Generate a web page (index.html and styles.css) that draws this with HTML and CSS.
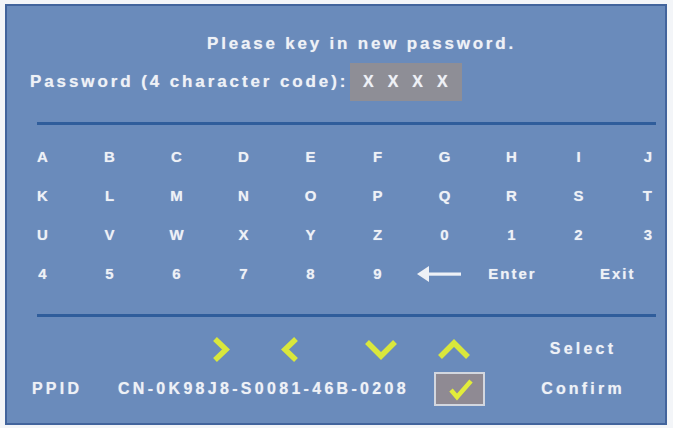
FILE: index.html
```html
<!DOCTYPE html>
<html lang="en">
<head>
<meta charset="utf-8">
<title>Password</title>
<link rel="stylesheet" href="styles.css">
</head>
<body>
<div class="panel">
  <div class="title">Please key in new password.</div>
  <div class="pw-row">
    <span class="pw-label">Password (4 character code):</span>
    <span class="pw-box"><span>X</span><span>X</span><span>X</span><span>X</span></span>
  </div>
  <div class="rule"></div>

  <div class="keys">
    <span>A</span><span>B</span><span>C</span><span>D</span><span>E</span><span>F</span><span>G</span><span>H</span><span>I</span><span class="last">J</span>
    <span>K</span><span>L</span><span>M</span><span>N</span><span>O</span><span>P</span><span>Q</span><span>R</span><span>S</span><span class="last">T</span>
    <span>U</span><span>V</span><span>W</span><span>X</span><span>Y</span><span>Z</span><span>0</span><span>1</span><span>2</span><span class="last">3</span>
    <span>4</span><span>5</span><span>6</span><span>7</span><span>8</span><span>9</span>
    <span class="back">
      <svg width="44" height="18" viewBox="0 0 44 18"><polygon points="0,9 12,1 12,17" fill="#eef1f6"/><rect x="10" y="7.5" width="34" height="3.2" fill="#eef1f6"/></svg>
    </span>
    <span>Enter</span>
    <span class="exit">Exit</span>
  </div>

  <div class="rule rule-low"></div>

  <div class="bottom">
    <div class="chevrons">
      <svg class="chev-r" width="18" height="27" viewBox="0 0 18 27"><polyline points="3,3 14,13.5 3,24" fill="none" stroke="#d9e73c" stroke-width="5.5"/></svg>
      <svg class="chev-l" width="18" height="27" viewBox="0 0 18 27"><polyline points="15,3 4,13.5 15,24" fill="none" stroke="#d9e73c" stroke-width="5.5"/></svg>
      <svg class="chev-d" width="32" height="21" viewBox="0 0 32 21"><polyline points="2,3 16,17 30,3" fill="none" stroke="#d9e73c" stroke-width="5.5"/></svg>
    </div>
    <div class="up-cell">
      <svg width="32" height="21" viewBox="0 0 32 21"><polyline points="2,18 16,4 30,18" fill="none" stroke="#d9e73c" stroke-width="5.5"/></svg>
    </div>
    <div class="hint">Select</div>

    <div class="ppid">PPID</div>
    <div class="code">CN-0K98J8-S0081-46B-0208</div>
    <div class="check-cell">
      <span class="check-box">
        <svg width="28" height="24" viewBox="0 0 28 24"><polyline points="5,13 11,20 25,4" fill="none" stroke="#e2ec3a" stroke-width="4.5"/></svg>
      </span>
    </div>
    <div class="hint">Confirm</div>
  </div>
</div>
</body>
</html>
```

FILE: styles.css
```css
html, body {
  margin: 0;
  padding: 0;
  overflow: hidden;
}

body {
  width: 673px;
  height: 428px;
  background: #f3f5f8;
  font-family: "Liberation Sans", Arial, sans-serif;
  font-weight: bold;
  color: #eef1f6;
}

.panel {
  box-sizing: border-box;
  margin: 4px 6px 0 5px;
  height: 421px;
  border: 2px solid #42649c;
  background: #6a8bbb;
  display: flex;
  flex-direction: column;
  text-shadow: 0 0 1px rgba(238, 241, 246, 0.6);
}

.title {
  margin-top: 28px;
  padding-left: 200px;
  font-size: 17px;
  line-height: 20px;
  letter-spacing: 2.8px;
}

.pw-row {
  margin-top: 9px;
  padding-left: 23px;
  display: flex;
  align-items: center;
}

.pw-label {
  font-size: 17px;
  letter-spacing: 2.9px;
  width: 320px;
}

.pw-box {
  box-sizing: border-box;
  width: 112px;
  height: 38px;
  background: #8e8e96;
  display: flex;
  align-items: center;
  gap: 14px;
  padding-left: 13px;
  font-size: 16px;
}

.rule {
  margin: 21px 9px 0 30px;
  height: 3px;
  background: #2f5d9b;
}

.keys {
  margin-top: 12px;
  padding-left: 3px;
  display: grid;
  grid-template-columns: repeat(9, 67px) 45px;
  grid-auto-rows: 39px;
  align-items: center;
  justify-items: center;
  font-size: 15px;
  letter-spacing: 2px;
}

.keys .last {
  justify-self: end;
  padding-right: 4px;
}

.keys .back {
  display: flex;
  justify-self: start;
  margin-left: 5px;
}

.keys .exit {
  grid-column: 9 / span 2;
  justify-self: start;
  padding-left: 54px;
}

.rule-low {
  margin-top: 21px;
}

.bottom {
  margin-top: 15px;
  display: grid;
  grid-template-columns: 111px 288px 94px 160px;
  grid-template-rows: 34px 35px;
  row-gap: 5px;
  align-items: center;
  font-size: 16px;
  letter-spacing: 3.2px;
  white-space: nowrap;
}

.code {
  letter-spacing: 3.3px;
}

.chevrons {
  grid-column: 2 / span 1;
  display: flex;
  align-items: center;
  padding-left: 94px;
}

.chev-l {
  margin-left: 51px;
}

.chev-d {
  margin-left: 66px;
}

.up-cell {
  display: flex;
  padding-left: 32px;
}

.hint {
  text-align: center;
  padding-left: 6px;
}

.ppid {
  padding-left: 25px;
}

.check-cell {
  display: flex;
  padding-left: 28px;
}

.check-box {
  box-sizing: border-box;
  width: 51px;
  height: 34px;
  border: 2px solid #d3d7df;
  background: #8f8a93;
  display: flex;
  align-items: center;
  justify-content: center;
}
```
